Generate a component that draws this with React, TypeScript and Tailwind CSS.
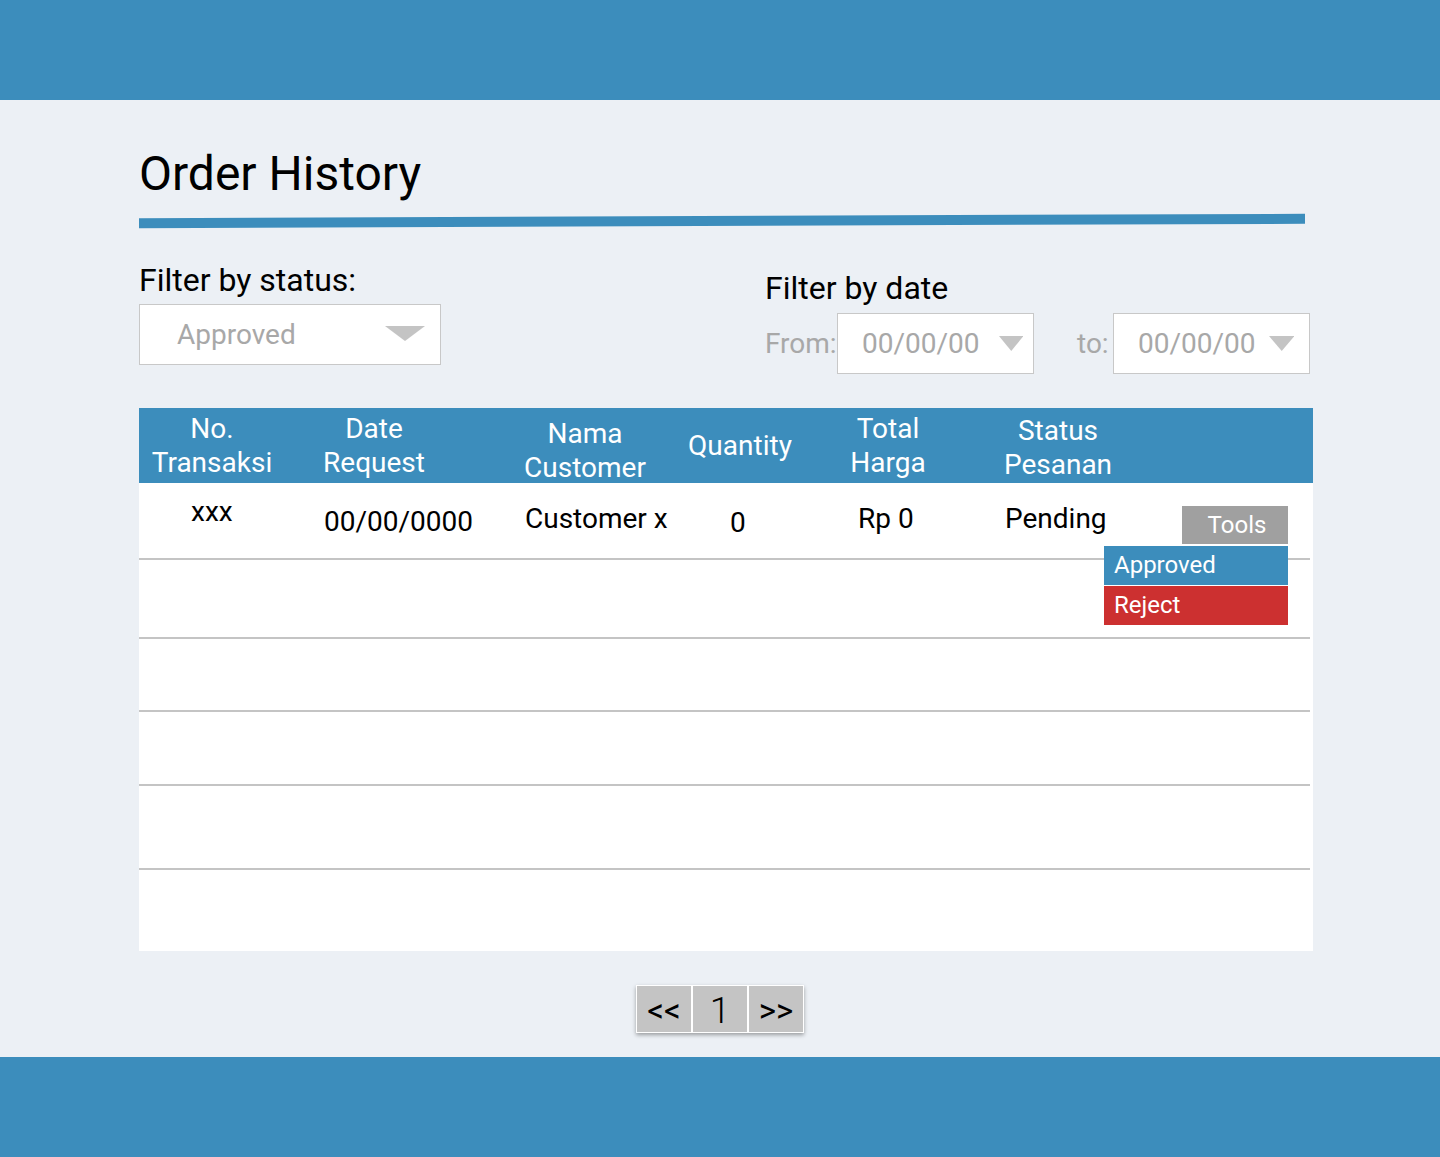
import React from 'react';

const headCols = [
  { w: 'w-[146px]', pt: 'pt-[4px]', lines: ['No.', 'Transaksi'] },
  { w: 'w-[178px]', pt: 'pt-[4px]', lines: ['Date', 'Request'] },
  { w: 'w-[244px]', pt: 'pt-[9px]', lines: ['Nama', 'Customer'] },
  { w: 'w-[66px]', pt: 'pt-[21px]', lines: ['Quantity'] },
  { w: 'w-[230px]', pt: 'pt-[4px]', lines: ['Total', 'Harga'] },
  { w: 'w-[110px]', pt: 'pt-[6px]', lines: ['Status', 'Pesanan'] },
];

const rowHeights = ['h-[77px]', 'h-[71px]', 'h-[72px]', 'h-[82px]'];

function Caret({ className }: { className: string }) {
  return (
    <svg className={className} viewBox="0 0 40 15" preserveAspectRatio="none">
      <polygon points="0,0 40,0 20,15" fill="#c4c4c4" />
    </svg>
  );
}

function DateBox({ pr, gap }: { pr: string; gap: string }) {
  return (
    <div className={`w-[197px] h-[61px] bg-white border border-[#c8c8c8] flex items-center pl-[24px] ${pr}`}>
      <span className="text-[28px] leading-[28px] text-[#a8a8a8]">00/00/00</span>
      <Caret className={`w-[26px] h-[15px] ${gap}`} />
    </div>
  );
}

function RowLine() {
  return <div className="h-[2px] w-[1171px] bg-[#c4c4c4]" />;
}

export default function App() {
  return (
    <div className="w-full min-h-[1157px] bg-[#ecf0f5] font-['Roboto',sans-serif] text-black flex flex-col">
      <div className="h-[100px] bg-[#3c8dbc]" />

      <main className="h-[957px] pt-[50px]">
        <div className="ml-[139px] w-[1174px]">
          <h1 className="text-[48px] leading-[48px]">Order History</h1>
          <div className="mt-[18px] h-[10px] w-[1166px] bg-[#3c8dbc] -rotate-[0.22deg]" />

          {/* filters */}
          <div className="mt-[38px] flex">
            <div className="w-[624px]">
              <div className="text-[32px] leading-[32px]">Filter by status:</div>
              <div className="mt-[8px] w-[302px] h-[61px] bg-white border border-[#c8c8c8] flex items-center justify-between pl-[37px] pr-[15px]">
                <span className="text-[28px] leading-[28px] text-[#a8a8a8]">Approved</span>
                <Caret className="w-[40px] h-[15px] -mt-[3px]" />
              </div>
            </div>
            <div className="pt-[8px]">
              <div className="text-[32px] leading-[32px] ml-[2px]">Filter by date</div>
              <div className="mt-[9px] flex items-center">
                <span className="w-[74px] pl-[2px] text-[28px] leading-[28px] text-[#a8a8a8]">From:</span>
                <DateBox pr="pr-[10px]" gap="ml-[19px]" />
                <span className="ml-[43px] w-[36px] text-[28px] leading-[28px] text-[#a8a8a8]">to:</span>
                <DateBox pr="pr-[15px]" gap="ml-[13px]" />
              </div>
            </div>
          </div>

          {/* table */}
          <div className="mt-[34px] bg-white">
            <div className="h-[75px] bg-[#3c8dbc] flex text-white text-[28px] leading-[34px]">
              {headCols.map((c) => (
                <div key={c.lines.join()} className={`${c.w} ${c.pt} flex flex-col items-center whitespace-nowrap`}>
                  {c.lines.map((l) => (
                    <div key={l}>{l}</div>
                  ))}
                </div>
              ))}
            </div>

            <div className="relative">
              <div className="h-[75px] flex text-[28px] leading-[28px] whitespace-nowrap">
                <div className="w-[185px] pl-[52px] pt-[15px]">xxx</div>
                <div className="w-[201px] pt-[25px]">00/00/0000</div>
                <div className="w-[205px] pt-[22px]">Customer x</div>
                <div className="w-[128px] pt-[26px]">0</div>
                <div className="w-[147px] pt-[22px]">Rp 0</div>
                <div className="pt-[22px]">Pending</div>
              </div>
              <RowLine />
              {rowHeights.map((h) => (
                <React.Fragment key={h}>
                  <div className={h} />
                  <RowLine />
                </React.Fragment>
              ))}
              <div className="h-[81px]" />

              {/* tools menu */}
              <div className="absolute left-[1043px] top-[23px] w-[106px] h-[38px] bg-[#a0a0a0] text-white text-[24px] leading-[24px] flex items-center justify-center pl-[4px]">
                Tools
              </div>
              <div className="absolute left-[965px] top-[63px] w-[184px] flex flex-col gap-[1px] text-white text-[24px] leading-[24px]">
                <div className="h-[39px] bg-[#3c8dbc] flex items-center pl-[10px] pb-[2px]">Approved</div>
                <div className="h-[39px] bg-[#cc3030] flex items-center pl-[10px] pb-[2px]">Reject</div>
              </div>
            </div>
          </div>
        </div>

        {/* pagination */}
        <div className="mt-[34px] flex justify-center">
          <div className="flex shadow-[0_2px_4px_rgba(0,0,0,0.35)]">
            <div className="w-[56px] h-[48px] bg-[#c4c4c4] border border-white flex items-center justify-center text-[33px] leading-[33px] pt-[3px]">&lt;&lt;</div>
            <div className="w-[56px] h-[48px] bg-[#c4c4c4] border border-white flex items-center justify-center text-[37px] leading-[37px] font-light pt-[2px]">1</div>
            <div className="w-[56px] h-[48px] bg-[#c4c4c4] border border-white flex items-center justify-center text-[33px] leading-[33px] pt-[3px]">&gt;&gt;</div>
          </div>
        </div>
      </main>

      <div className="h-[100px] bg-[#3c8dbc]" />
    </div>
  );
}
